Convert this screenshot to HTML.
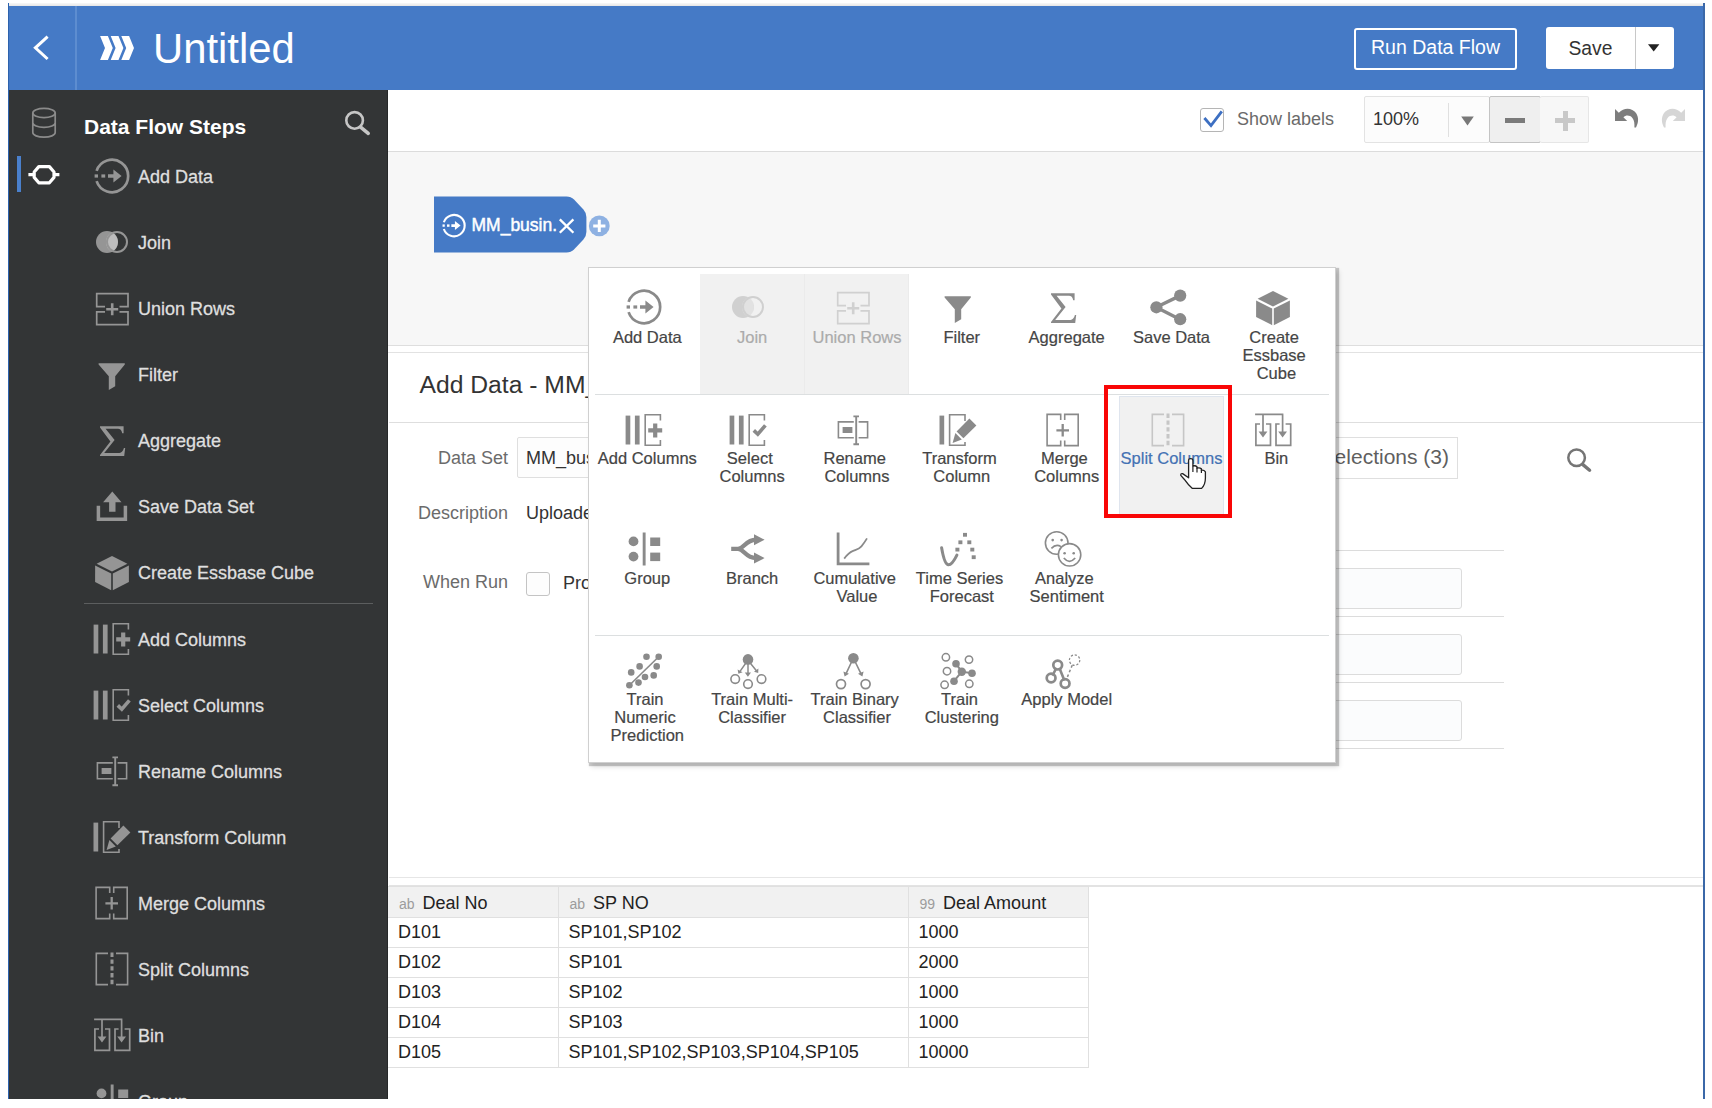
<!DOCTYPE html>
<html lang="en">
<head>
<meta charset="utf-8">
<title>Untitled - Data Flow</title>
<style>
*{box-sizing:border-box;margin:0;padding:0}
html,body{width:1712px;height:1108px;overflow:hidden;background:#fff}
body{font-family:"Liberation Sans",Arial,sans-serif;color:#333;position:relative}
.abs{position:absolute}
.t{position:absolute;white-space:nowrap;line-height:1}
#frame{position:absolute;left:8px;top:3px;width:1697px;height:1095.6px;background:#fff;overflow:hidden;border-left:1px solid #2d62ad;border-right:2px solid #3b68a8}
/* coordinates inside #frame are offset: use .in to re-base to page coordinates */
#in{position:absolute;left:-9px;top:-3px;width:1712px;height:1108px}
#hdr{left:8px;top:6px;width:1697px;height:84px;background:#457ac6}
#hdr .div{left:75px;top:5px;width:1px;height:85px;background:#6a97d6}
#side{left:8px;top:90px;width:380px;height:1009px;background:#333536;border-right:1px solid #262829}
.sitem{position:absolute;left:138px;font-size:18px;color:#dfdfdf;line-height:20px;white-space:nowrap;-webkit-text-stroke:.3px #dfdfdf}
.sico{position:absolute;left:92px;width:38px;height:38px;color:#9a9a9a}
#tool{left:388px;top:90px;width:1317px;height:62px;background:#fff;border-bottom:1px solid #dcdcdc}
#canvas{left:388px;top:152px;width:1317px;height:194px;background:#f7f7f7;border-bottom:1px solid #dedede}
#panel{left:388px;top:352px;width:1317px;height:526px;background:#fff;border-top:1px solid #e2e2e2}
.lbl{position:absolute;font-size:18px;color:#6b6b6b;white-space:nowrap;line-height:20px;text-align:right;width:120px;left:388px}
.val{position:absolute;font-size:18px;color:#333;white-space:nowrap;line-height:20px}
#pop{left:588px;top:267px;width:748px;height:496px;background:#fff;border:1px solid #d0d0d0;box-shadow:2px 2px 1px 1px rgba(0,0,0,.2),3px 4px 5px rgba(0,0,0,.13)}
.plab{position:absolute;width:140px;text-align:center;font-size:16.5px;line-height:18px;white-space:nowrap;-webkit-text-stroke:.2px}
table{border-collapse:collapse;position:absolute;left:388px;top:886px;font-size:18px;color:#222}
td,th{border:1px solid #e0e0e0;height:30px;padding:0 0 0 10px;text-align:left;font-weight:normal;white-space:nowrap;line-height:27px}
td:first-child,th:first-child{border-left:none}
th{background:#f1f1f1;height:31px;line-height:26px;padding-top:2px}
th small{font-size:14px;color:#9c9c9c;margin-right:8px;margin-left:1px;position:relative;top:0px}
</style>
</head>
<body>

<div id="frame"><div id="in">

<!-- HEADER -->
<div class="abs" style="left:8px;top:3px;width:1697px;height:3px;background:linear-gradient(#f8f8f8,#e6e6e6)"></div>
<div id="hdr" class="abs"></div>
<div class="abs" style="left:75px;top:6px;width:2px;height:84px;background:#5d8dd0"></div>
<div class="t" id="title" style="left:153px;top:27px;font-size:41.8px;color:#fff;line-height:44px">Untitled</div>
<div class="abs" id="runbtn" style="left:1354px;top:28px;width:163px;height:42px;border:2px solid #fff;border-radius:3px;color:#fff;font-size:19.5px;line-height:34px;text-align:center">Run Data Flow</div>
<div class="abs" id="savebtn" style="left:1546px;top:27px;width:128px;height:42px;background:#fff;border-radius:3px"></div>
<div class="t" style="left:1568.5px;top:37.5px;font-size:19.3px;color:#333;line-height:22px">Save</div>
<div class="abs" style="left:1635px;top:27px;width:1px;height:42px;background:#c8c8c8"></div>

<svg class="abs" style="left:30px;top:32px;width:24px;height:32px" viewBox="30 32 24 32"><path d="M47.6 36.6L35.4 47.8L47.6 59" fill="none" stroke="#fff" stroke-width="3"/></svg>
<svg class="abs" style="left:98px;top:34px;width:38px;height:28px" viewBox="98 34 38 28"><g fill="#fff"><path id="chv" d="M100.1 35.9H107.9L112.8 47.9L107.9 60H100.1L105 47.9Z"/><path d="M110.7 35.9H118.5L123.4 47.9L118.5 60H110.7L115.6 47.9Z"/><path d="M121.3 35.9H129.1L134 47.9L129.1 60H121.3L126.2 47.9Z"/></g></svg>
<svg class="abs" style="left:1646px;top:42px;width:16px;height:12px" viewBox="1646 42 16 12"><path d="M1648 44.2H1659.4L1653.7 51.4Z" fill="#222"/></svg>

<!-- SIDEBAR -->
<div id="side" class="abs"></div>
<div class="t" style="left:84px;top:116px;font-size:21px;font-weight:bold;color:#fff;line-height:22px">Data Flow Steps</div>
<div class="abs" style="left:17px;top:156px;width:4px;height:36px;background:#4a80cc"></div>
<div class="abs" style="left:84px;top:603px;width:289px;height:1px;background:#5c5e5f"></div>
<svg class="abs" style="left:28px;top:104px;width:34px;height:38px" viewBox="28 104 34 38"><g fill="none" stroke="#8b8b8b" stroke-width="1.7"><ellipse cx="44" cy="113" rx="11.2" ry="4.6"/><path d="M32.8 113V132.6C32.8 135.2 37.8 137.2 44 137.2S55.2 135.2 55.2 132.6V113M32.8 122.8C32.8 125.4 37.8 127.4 44 127.4S55.2 125.4 55.2 122.8"/></g></svg>
<svg class="abs" style="left:340px;top:106px;width:34px;height:34px" viewBox="340 106 34 34"><circle cx="354.6" cy="120.4" r="8.3" fill="none" stroke="#c6c6c6" stroke-width="2.6"/><path d="M360.6 127.2L368.2 133.4" stroke="#c6c6c6" stroke-width="3.6" stroke-linecap="round"/></svg>
<svg class="abs" style="left:26px;top:160px;width:38px;height:30px" viewBox="26 160 38 30"><path d="M38.8 166.6H49.4L54 172V177.4L49.4 182.8H38.8L34.2 177.4V172ZM28.4 174.7H34.2M54 174.7H59.4" fill="none" stroke="#fff" stroke-width="3.2" stroke-linejoin="round"/></svg>
<svg class="abs" viewBox="0 0 40 40" style="left:91.5px;top:155.6px;width:40px;height:40px;color:#959595;overflow:visible"><path d="M4.6 14.9A16.2 16.2 0 1 1 4.6 25.1" fill="none" stroke="currentColor" stroke-width="2.7"/><rect x="2.6" y="18.4" width="3.4" height="3.2" fill="currentColor"/><rect x="9.4" y="18.4" width="3.8" height="3.2" fill="currentColor"/><path d="M16 18.2H21.4V13.6L29.6 20L21.4 26.4V21.8H16Z" fill="currentColor"/></svg>
<div class="sitem" style="top:167.0px">Add Data</div>
<svg class="abs" viewBox="0 0 40 40" style="left:91.5px;top:221.6px;width:40px;height:40px;color:#959595;overflow:visible"><circle cx="15" cy="20" r="11" fill="currentColor"/><path d="M20 10.2A11 11 0 0 1 20 29.8A11 11 0 0 1 20 10.2Z" fill="#fff" fill-opacity=".38"/><circle cx="25" cy="20" r="10" fill="none" stroke="currentColor" stroke-width="2"/></svg>
<div class="sitem" style="top:233.0px">Join</div>
<svg class="abs" viewBox="0 0 40 40" style="left:91.5px;top:287.6px;width:40px;height:40px;color:#959595;overflow:visible"><path d="M13 18.6H4.7V5.6H36V18.6H27.5M13 23.8H4.7V36.6H36V23.8H27.5" fill="none" stroke="currentColor" stroke-width="1.7"/><path d="M20.2 15.2V27.2M14.2 21.2H26.2" fill="none" stroke="currentColor" stroke-width="2.6"/></svg>
<div class="sitem" style="top:299.0px">Union Rows</div>
<svg class="abs" viewBox="0 0 40 40" style="left:91.5px;top:353.6px;width:40px;height:40px;color:#959595;overflow:visible"><path d="M7.2 9.2H32.2Q33.4 9.2 32.8 10.6L23.2 22.2V32.2L16.8 36V22.2L6.6 10.6Q6 9.2 7.2 9.2Z" fill="currentColor"/></svg>
<div class="sitem" style="top:365.0px">Filter</div>
<svg class="abs" viewBox="0 0 40 40" style="left:91.5px;top:419.6px;width:40px;height:40px;color:#959595;overflow:visible"><path d="M8 6.3H31.6V13.2H30.2C29.6 10 28.4 8.7 25 8.7H13.6L22.6 20L12.2 33H26.2C29.6 33 30.9 31.5 31.9 28H33.2L32.2 35.9H8V34.9L18.4 21.6L8 7.4Z" fill="currentColor"/></svg>
<div class="sitem" style="top:431.0px">Aggregate</div>
<svg class="abs" viewBox="0 0 40 40" style="left:91.5px;top:485.6px;width:40px;height:40px;color:#959595;overflow:visible"><path d="M6.4 19.8V33.2H33.4V19.8" fill="none" stroke="currentColor" stroke-width="3.5"/><path d="M20.3 5.5L29.5 16.3H23.5V25.8H17.1V16.3H11.1Z" fill="currentColor"/></svg>
<div class="sitem" style="top:497.0px">Save Data Set</div>
<svg class="abs" viewBox="0 0 40 40" style="left:91.5px;top:551.6px;width:40px;height:40px;color:#959595;overflow:visible"><path d="M20 3.9L35.4 11.7L20 19.5L4.6 11.7Z" fill="currentColor"/><path d="M3.1 13.4L19.2 21.5V38.2L3.1 30Z" fill="currentColor"/><path d="M36.9 13.4L20.8 21.5V38.2L36.9 30Z" fill="currentColor"/></svg>
<div class="sitem" style="top:563.0px">Create Essbase Cube</div>
<svg class="abs" viewBox="0 0 40 40" style="left:91.5px;top:618.6px;width:40px;height:40px;color:#959595;overflow:visible"><rect x="1.6" y="5.6" width="4.7" height="28.9" fill="currentColor"/><rect x="10.9" y="5.6" width="4.7" height="28.9" fill="currentColor"/><path d="M36.4 10.4V4.8H21.2V35.3H36.4V30" fill="none" stroke="currentColor" stroke-width="1.6"/><path d="M31.2 13.4V27.4M24.2 20.4H38.2" fill="none" stroke="currentColor" stroke-width="4.2"/></svg>
<div class="sitem" style="top:629.5px">Add Columns</div>
<svg class="abs" viewBox="0 0 40 40" style="left:91.5px;top:684.6px;width:40px;height:40px;color:#959595;overflow:visible"><rect x="1.6" y="5.6" width="4.7" height="28.9" fill="currentColor"/><rect x="10.9" y="5.6" width="4.7" height="28.9" fill="currentColor"/><path d="M36.4 10.4V4.8H21.2V35.3H36.4V30" fill="none" stroke="currentColor" stroke-width="1.6"/><path d="M25.8 20.4L29.8 24.2L37.4 15.4" fill="none" stroke="currentColor" stroke-width="3.6"/></svg>
<div class="sitem" style="top:695.5px">Select Columns</div>
<svg class="abs" viewBox="0 0 40 40" style="left:91.5px;top:750.6px;width:40px;height:40px;color:#959595;overflow:visible"><path d="M20.8 11.9H5.4V27.7H20.8M25.6 11.9H34.6V27.7H25.6" fill="none" stroke="currentColor" stroke-width="1.6"/><path d="M23.2 5.8V34.8M20.4 6.4H26M20.4 34.2H26" fill="none" stroke="currentColor" stroke-width="1.9"/><rect x="9.6" y="17" width="9.8" height="6" fill="currentColor"/></svg>
<div class="sitem" style="top:761.5px">Rename Columns</div>
<svg class="abs" viewBox="0 0 40 40" style="left:91.5px;top:816.6px;width:40px;height:40px;color:#959595;overflow:visible"><rect x="1.5" y="5.6" width="4.7" height="28.9" fill="currentColor"/><path d="M27 11V4.8H11.6V35.3H27V32" fill="none" stroke="currentColor" stroke-width="1.6"/><path d="M31.4 8.6L38.4 15.6L25.4 28.2L18.6 21.4Z" fill="currentColor"/><path d="M17.4 23L23.8 29.6L14.6 33Z" fill="currentColor"/></svg>
<div class="sitem" style="top:827.5px">Transform Column</div>
<svg class="abs" viewBox="0 0 40 40" style="left:91.5px;top:882.6px;width:40px;height:40px;color:#959595;overflow:visible"><path d="M17.7 10V4.4H4.1V35.6H17.7V30.4M21.7 10V4.4H35.2V35.6H21.7V30.4" fill="none" stroke="currentColor" stroke-width="1.6"/><path d="M19.7 14V26.6M13.4 20.3H26" fill="none" stroke="currentColor" stroke-width="2.3"/></svg>
<div class="sitem" style="top:893.5px">Merge Columns</div>
<svg class="abs" viewBox="0 0 40 40" style="left:91.5px;top:948.6px;width:40px;height:40px;color:#959595;overflow:visible"><path d="M16 4.4H4.3V35.6H16M24 4.4H35.6V35.6H24" fill="none" stroke="currentColor" stroke-width="1.6"/><path d="M20 3.6V36.4" fill="none" stroke="currentColor" stroke-width="3" stroke-dasharray="4.4 2.4"/></svg>
<div class="sitem" style="top:959.5px">Split Columns</div>
<svg class="abs" viewBox="0 0 40 40" style="left:91.5px;top:1014.6px;width:40px;height:40px;color:#959595;overflow:visible"><path d="M2.1 4.4H30.4M10 4.4V22M29.6 4.4V22" fill="none" stroke="currentColor" stroke-width="1.7"/><path d="M5.6 21.4H14.4L10 27.4ZM25.2 21.4H34L29.6 27.4Z" fill="currentColor"/><path d="M7 14H2.9V35.4H17.5V14H13M26.6 14H23V35.4H37.7V14H32.6" fill="none" stroke="currentColor" stroke-width="1.7"/></svg>
<div class="sitem" style="top:1025.5px">Bin</div>
<svg class="abs" viewBox="0 0 40 40" style="left:91.5px;top:1080.6px;width:40px;height:40px;color:#959595;overflow:visible"><circle cx="9.5" cy="12.4" r="4.9" fill="currentColor"/><circle cx="9.5" cy="27.6" r="4.9" fill="currentColor"/><rect x="18.7" y="3.5" width="2.9" height="33" fill="currentColor"/><rect x="26.2" y="8.5" width="10" height="8.5" fill="currentColor"/><rect x="26.2" y="23.6" width="10" height="8.5" fill="currentColor"/></svg>
<div class="sitem" style="top:1091.5px">Group</div>


<!-- TOOLBAR -->
<div id="tool" class="abs"></div>
<div class="abs" style="left:1200px;top:108px;width:24px;height:24px;border:1px solid #b5b5b5;border-radius:3px;background:#fff"></div>
<div class="t" style="left:1237px;top:109px;font-size:18px;color:#6a6a6a;line-height:20px">Show labels</div>
<div class="abs" style="left:1364px;top:96px;width:126px;height:47px;border:1px solid #e3e3e3;border-radius:2px;background:#fcfcfc"></div>
<div class="t" style="left:1373px;top:109px;font-size:18px;color:#333;line-height:20px">100%</div>
<div class="abs" style="left:1448px;top:103px;width:1px;height:34px;background:#e0e0e0"></div>
<div class="abs" style="left:1489px;top:96px;width:52px;height:47px;border:1px solid #c4c4c4;border-radius:2px;background:#efefef"></div>
<div class="abs" style="left:1540px;top:96px;width:49px;height:47px;border:1px solid #e6e6e6;border-left:none;border-radius:2px;background:#f7f7f7"></div>

<svg class="abs" style="left:1200px;top:106px;width:28px;height:28px" viewBox="1200 106 28 28"><path d="M1204.4 118L1211 125.6L1221.8 111.4" fill="none" stroke="#3d6fc2" stroke-width="2.8"/></svg>
<svg class="abs" style="left:1458px;top:112px;width:20px;height:16px" viewBox="1458 112 20 16"><path d="M1461.2 116.6H1473.8L1467.5 125.4Z" fill="#787878"/></svg>
<div class="abs" style="left:1505px;top:118px;width:20px;height:5px;background:#7a7a7a"></div>
<div class="abs" style="left:1555px;top:118px;width:20px;height:5px;background:#c8c8c8"></div>
<div class="abs" style="left:1562.5px;top:110.5px;width:5px;height:20px;background:#c8c8c8"></div>
<svg class="abs" style="left:1612px;top:104px;width:30px;height:28px" viewBox="-3 -4 30 28"><path d="M0 1L0 13L12.2 13L8.4 9.2C11 6.8 15 7 17.4 10C19.4 12.4 19.6 15.6 19.4 19.4L21 19.4C23.6 14.6 24 9.6 21 5C17.4 0 9.4 -1.4 3.8 4.8Z" fill="#7d7d7d"/></svg>
<svg class="abs" style="left:1658px;top:104px;width:30px;height:28px" viewBox="-3 -4 30 28"><path transform="translate(24 0) scale(-1 1)" d="M0 1L0 13L12.2 13L8.4 9.2C11 6.8 15 7 17.4 10C19.4 12.4 19.6 15.6 19.4 19.4L21 19.4C23.6 14.6 24 9.6 21 5C17.4 0 9.4 -1.4 3.8 4.8Z" fill="#d6d6d6"/></svg>

<!-- CANVAS -->
<div id="canvas" class="abs"></div>

<svg class="abs" style="left:430px;top:192px;width:190px;height:66px" viewBox="430 192 190 66">
<path d="M434 196.4H566.5Q571 196.4 574 199.4L583.4 209.4Q586.4 212.6 586.4 217V231.8Q586.4 236.2 583.4 239.4L574 249.4Q571 252.4 566.5 252.4H434Z" fill="#457ac6"/>
<g transform="translate(440.8 212.4) scale(0.66)" fill="#fff" stroke="none"><path d="M4.6 14.9A16.2 16.2 0 1 1 4.6 25.1" fill="none" stroke="#fff" stroke-width="3.2"/><rect x="2.6" y="18.2" width="3.4" height="3.6"/><rect x="9.4" y="18.2" width="3.8" height="3.6"/><path d="M16 18H21.4V13.2L30 20L21.4 26.8V22H16Z"/></g>
<path d="M559.8 219.4L573.4 232.8M573.4 219.4L559.8 232.8" stroke="#fff" stroke-width="2.3" fill="none"/>
<circle cx="599.3" cy="225.9" r="10.4" fill="#8eb1e2"/><path d="M599.3 219.8V232M593.2 225.9H605.4" stroke="#fff" stroke-width="3" fill="none"/>
</svg>
<div class="t" style="left:471.5px;top:215px;font-size:17.5px;color:#fff;line-height:20px;-webkit-text-stroke:.45px #fff">MM_busin.</div>

<!-- PANEL -->
<div id="panel" class="abs"></div>
<div class="t" style="left:419.5px;top:370.5px;font-size:24.7px;color:#333;line-height:28px">Add Data - MM_business</div>
<div class="abs" style="left:389px;top:422px;width:1316px;height:1px;background:#dedede"></div>
<div class="lbl" style="top:448px">Data Set</div>
<div class="abs" style="left:517px;top:437px;width:360px;height:41px;border:1px solid #dfdfdf;border-radius:2px;background:#fdfdfd"></div>
<div class="val" style="left:526px;top:448px">MM_business_deals</div>
<div class="abs" style="left:1200px;top:437px;width:258px;height:42px;border:1px solid #dfdfdf;background:#fff"></div>
<div class="t" style="right:263px;top:445px;font-size:21px;color:#5f5f5f;line-height:23px">Selections (3)</div>
<div class="lbl" style="top:503px">Description</div>
<div class="val" style="left:526px;top:503px">Uploaded from MM_business.xlsx</div>
<div class="lbl" style="top:572px">When Run</div>
<div class="abs" style="left:526px;top:572px;width:24px;height:24px;border:1px solid #c4c4c4;border-radius:3px;background:#fdfdfd"></div>
<div class="val" style="left:563px;top:573px">Prompt to select Data Set</div>

<div class="abs" style="left:1200px;top:550px;width:304px;height:1px;background:#dcdcdc"></div>
<div class="abs" style="left:1200px;top:616px;width:304px;height:1px;background:#dcdcdc"></div>
<div class="abs" style="left:1200px;top:682px;width:304px;height:1px;background:#dcdcdc"></div>
<div class="abs" style="left:1200px;top:748px;width:304px;height:1px;background:#dcdcdc"></div>
<div class="abs" style="left:1200px;top:568px;width:262px;height:41px;border:1px solid #dcdcdc;border-radius:3px;background:#fbfcfd"></div>
<div class="abs" style="left:1200px;top:634px;width:262px;height:41px;border:1px solid #dcdcdc;border-radius:3px;background:#fbfcfd"></div>
<div class="abs" style="left:1200px;top:700px;width:262px;height:41px;border:1px solid #dcdcdc;border-radius:3px;background:#fbfcfd"></div>

<svg class="abs" style="left:1562px;top:444px;width:34px;height:32px" viewBox="1562 444 34 32"><circle cx="1576.6" cy="457.8" r="8.3" fill="none" stroke="#757575" stroke-width="2.5"/><path d="M1582.6 464.4L1589.6 470.2" stroke="#757575" stroke-width="3.4" stroke-linecap="round"/></svg>

<!-- TABLE -->
<div class="abs" style="left:389px;top:877px;width:1316px;height:1px;background:#e6e6e6"></div>
<div class="abs" style="left:389px;top:885px;width:1316px;height:2px;background:#e3e3e3"></div>
<table>
<tr><th style="width:170px"><small>ab</small>Deal No</th><th style="width:350px"><small>ab</small>SP NO</th><th style="width:180px"><small>99</small>Deal Amount</th></tr>
<tr><td>D101</td><td>SP101,SP102</td><td>1000</td></tr>
<tr><td>D102</td><td>SP101</td><td>2000</td></tr>
<tr><td>D103</td><td>SP102</td><td>1000</td></tr>
<tr><td>D104</td><td>SP103</td><td>1000</td></tr>
<tr><td>D105</td><td>SP101,SP102,SP103,SP104,SP105</td><td>10000</td></tr>
</table>

<!-- POPUP -->
<div id="pop" class="abs"></div>
<div class="abs" style="left:595px;top:394px;width:734px;height:1px;background:#dcdfe0"></div>
<div class="abs" style="left:595px;top:635px;width:734px;height:1px;background:#dcdfe0"></div>
<svg class="abs" viewBox="0 0 40 40" style="left:623.6px;top:287.3px;width:40px;height:40px;color:#8a8a8a;overflow:visible"><path d="M4.6 14.9A16.2 16.2 0 1 1 4.6 25.1" fill="none" stroke="currentColor" stroke-width="2.7"/><rect x="2.6" y="18.4" width="3.4" height="3.2" fill="currentColor"/><rect x="9.4" y="18.4" width="3.8" height="3.2" fill="currentColor"/><path d="M16 18.2H21.4V13.6L29.6 20L21.4 26.4V21.8H16Z" fill="currentColor"/></svg>
<div class="plab" style="left:577.3px;top:328px;color:#454545">Add Data</div>
<div class="abs" style="left:699.9px;top:274px;width:104.8px;height:120px;background:#f1f1f1;border-right:1px solid #ebebeb"></div>
<svg class="abs" viewBox="0 0 40 40" style="left:728.4px;top:287.3px;width:40px;height:40px;color:#d0d0d0;overflow:visible"><circle cx="15" cy="20" r="11" fill="currentColor"/><path d="M20 10.2A11 11 0 0 1 20 29.8A11 11 0 0 1 20 10.2Z" fill="#fff" fill-opacity=".38"/><circle cx="25" cy="20" r="10" fill="none" stroke="currentColor" stroke-width="2"/></svg>
<div class="plab" style="left:682.1px;top:328px;color:#ababab">Join</div>
<div class="abs" style="left:804.7px;top:274px;width:104.8px;height:120px;background:#f1f1f1;border-right:1px solid #ebebeb"></div>
<svg class="abs" viewBox="0 0 40 40" style="left:833.3px;top:287.3px;width:40px;height:40px;color:#d0d0d0;overflow:visible"><path d="M13 18.6H4.7V5.6H36V18.6H27.5M13 23.8H4.7V36.6H36V23.8H27.5" fill="none" stroke="currentColor" stroke-width="1.7"/><path d="M20.2 15.2V27.2M14.2 21.2H26.2" fill="none" stroke="currentColor" stroke-width="2.6"/></svg>
<div class="plab" style="left:787.0px;top:328px;color:#ababab">Union Rows</div>
<svg class="abs" viewBox="0 0 40 40" style="left:938.1px;top:287.3px;width:40px;height:40px;color:#8a8a8a;overflow:visible"><path d="M7.2 9.2H32.2Q33.4 9.2 32.8 10.6L23.2 22.2V32.2L16.8 36V22.2L6.6 10.6Q6 9.2 7.2 9.2Z" fill="currentColor"/></svg>
<div class="plab" style="left:891.8px;top:328px;color:#454545">Filter</div>
<svg class="abs" viewBox="0 0 40 40" style="left:1043.0px;top:287.3px;width:40px;height:40px;color:#8a8a8a;overflow:visible"><path d="M8 6.3H31.6V13.2H30.2C29.6 10 28.4 8.7 25 8.7H13.6L22.6 20L12.2 33H26.2C29.6 33 30.9 31.5 31.9 28H33.2L32.2 35.9H8V34.9L18.4 21.6L8 7.4Z" fill="currentColor"/></svg>
<div class="plab" style="left:996.7px;top:328px;color:#454545">Aggregate</div>
<svg class="abs" viewBox="0 0 40 40" style="left:1147.8px;top:287.3px;width:40px;height:40px;color:#8a8a8a;overflow:visible"><path d="M32.2 8.6L8.2 20.3L32.2 32.4" fill="none" stroke="currentColor" stroke-width="3.4" stroke-linejoin="round"/><circle cx="32.2" cy="8.6" r="6.1" fill="currentColor"/><circle cx="8.4" cy="20.3" r="6.1" fill="currentColor"/><circle cx="32.2" cy="32.2" r="6.1" fill="currentColor"/></svg>
<div class="plab" style="left:1101.5px;top:328px;color:#454545">Save Data</div>
<svg class="abs" viewBox="0 0 40 40" style="left:1252.7px;top:287.3px;width:40px;height:40px;color:#8a8a8a;overflow:visible"><path d="M20 3.9L35.4 11.7L20 19.5L4.6 11.7Z" fill="currentColor"/><path d="M3.1 13.4L19.2 21.5V38.2L3.1 30Z" fill="currentColor"/><path d="M36.9 13.4L20.8 21.5V38.2L36.9 30Z" fill="currentColor"/></svg>
<div class="plab" style="left:1206.4px;top:328px;color:#454545">Create&nbsp;<br>Essbase&nbsp;<br>Cube</div>
<svg class="abs" viewBox="0 0 40 40" style="left:623.6px;top:409.5px;width:40px;height:40px;color:#8a8a8a;overflow:visible"><rect x="1.6" y="5.6" width="4.7" height="28.9" fill="currentColor"/><rect x="10.9" y="5.6" width="4.7" height="28.9" fill="currentColor"/><path d="M36.4 10.4V4.8H21.2V35.3H36.4V30" fill="none" stroke="currentColor" stroke-width="1.6"/><path d="M31.2 13.4V27.4M24.2 20.4H38.2" fill="none" stroke="currentColor" stroke-width="4.2"/></svg>
<div class="plab" style="left:577.3px;top:449px;color:#454545">Add Columns</div>
<svg class="abs" viewBox="0 0 40 40" style="left:728.4px;top:409.5px;width:40px;height:40px;color:#8a8a8a;overflow:visible"><rect x="1.6" y="5.6" width="4.7" height="28.9" fill="currentColor"/><rect x="10.9" y="5.6" width="4.7" height="28.9" fill="currentColor"/><path d="M36.4 10.4V4.8H21.2V35.3H36.4V30" fill="none" stroke="currentColor" stroke-width="1.6"/><path d="M25.8 20.4L29.8 24.2L37.4 15.4" fill="none" stroke="currentColor" stroke-width="3.6"/></svg>
<div class="plab" style="left:682.1px;top:449px;color:#454545">Select&nbsp;<br>Columns</div>
<svg class="abs" viewBox="0 0 40 40" style="left:833.3px;top:409.5px;width:40px;height:40px;color:#8a8a8a;overflow:visible"><path d="M20.8 11.9H5.4V27.7H20.8M25.6 11.9H34.6V27.7H25.6" fill="none" stroke="currentColor" stroke-width="1.6"/><path d="M23.2 5.8V34.8M20.4 6.4H26M20.4 34.2H26" fill="none" stroke="currentColor" stroke-width="1.9"/><rect x="9.6" y="17" width="9.8" height="6" fill="currentColor"/></svg>
<div class="plab" style="left:787.0px;top:449px;color:#454545">Rename&nbsp;<br>Columns</div>
<svg class="abs" viewBox="0 0 40 40" style="left:938.1px;top:409.5px;width:40px;height:40px;color:#8a8a8a;overflow:visible"><rect x="1.5" y="5.6" width="4.7" height="28.9" fill="currentColor"/><path d="M27 11V4.8H11.6V35.3H27V32" fill="none" stroke="currentColor" stroke-width="1.6"/><path d="M31.4 8.6L38.4 15.6L25.4 28.2L18.6 21.4Z" fill="currentColor"/><path d="M17.4 23L23.8 29.6L14.6 33Z" fill="currentColor"/></svg>
<div class="plab" style="left:891.8px;top:449px;color:#454545">Transform&nbsp;<br>Column</div>
<svg class="abs" viewBox="0 0 40 40" style="left:1043.0px;top:409.5px;width:40px;height:40px;color:#8a8a8a;overflow:visible"><path d="M17.7 10V4.4H4.1V35.6H17.7V30.4M21.7 10V4.4H35.2V35.6H21.7V30.4" fill="none" stroke="currentColor" stroke-width="1.6"/><path d="M19.7 14V26.6M13.4 20.3H26" fill="none" stroke="currentColor" stroke-width="2.3"/></svg>
<div class="plab" style="left:996.7px;top:449px;color:#454545">Merge&nbsp;<br>Columns</div>
<div class="abs" style="left:1119.2px;top:396px;width:104.8px;height:120px;background:#f1f1f1;border:1px solid #dfe5ee"></div>
<svg class="abs" viewBox="0 0 40 40" style="left:1147.8px;top:409.5px;width:40px;height:40px;color:#c6c6c6;overflow:visible"><path d="M16 4.4H4.3V35.6H16M24 4.4H35.6V35.6H24" fill="none" stroke="currentColor" stroke-width="1.6"/><path d="M20 3.6V36.4" fill="none" stroke="currentColor" stroke-width="3" stroke-dasharray="4.4 2.4"/></svg>
<div class="plab" style="left:1101.5px;top:449px;color:#4472b4">Split Columns</div>
<svg class="abs" viewBox="0 0 40 40" style="left:1252.7px;top:409.5px;width:40px;height:40px;color:#8a8a8a;overflow:visible"><path d="M2.1 4.4H30.4M10 4.4V22M29.6 4.4V22" fill="none" stroke="currentColor" stroke-width="1.7"/><path d="M5.6 21.4H14.4L10 27.4ZM25.2 21.4H34L29.6 27.4Z" fill="currentColor"/><path d="M7 14H2.9V35.4H17.5V14H13M26.6 14H23V35.4H37.7V14H32.6" fill="none" stroke="currentColor" stroke-width="1.7"/></svg>
<div class="plab" style="left:1206.4px;top:449px;color:#454545">Bin</div>
<svg class="abs" viewBox="0 0 40 40" style="left:623.6px;top:529.4px;width:40px;height:40px;color:#8a8a8a;overflow:visible"><circle cx="9.5" cy="12.4" r="4.9" fill="currentColor"/><circle cx="9.5" cy="27.6" r="4.9" fill="currentColor"/><rect x="18.7" y="3.5" width="2.9" height="33" fill="currentColor"/><rect x="26.2" y="8.5" width="10" height="8.5" fill="currentColor"/><rect x="26.2" y="23.6" width="10" height="8.5" fill="currentColor"/></svg>
<div class="plab" style="left:577.3px;top:569px;color:#454545">Group</div>
<svg class="abs" viewBox="0 0 40 40" style="left:728.4px;top:529.4px;width:40px;height:40px;color:#8a8a8a;overflow:visible"><path d="M3.2 19.9H10C16 19.9 17.5 10.7 28 10.7M10 19.9C16 19.9 17.5 29.1 28 29.1" fill="none" stroke="currentColor" stroke-width="4.4"/><path d="M26 5.2L36.6 10.7L26 16.2ZM26 23.6L36.6 29.1L26 34.6Z" fill="currentColor"/></svg>
<div class="plab" style="left:682.1px;top:569px;color:#454545">Branch</div>
<svg class="abs" viewBox="0 0 40 40" style="left:833.3px;top:529.4px;width:40px;height:40px;color:#8a8a8a;overflow:visible"><path d="M5.1 3.4V34.8H36.4" fill="none" stroke="currentColor" stroke-width="2.8"/><path d="M11.2 29.6C14 26 16 23.6 19.6 22.2C24 20.4 26 20.2 28.4 17.4C30.6 14.8 32.4 12 34 9.4" fill="none" stroke="currentColor" stroke-width="1.8"/></svg>
<div class="plab" style="left:787.0px;top:569px;color:#454545">Cumulative&nbsp;<br>Value</div>
<svg class="abs" viewBox="0 0 40 40" style="left:938.1px;top:529.4px;width:40px;height:40px;color:#8a8a8a;overflow:visible"><path d="M3.6 18.7C5 27 7 35.6 10.4 35.8C13.8 36 17 30 18.9 26.1" fill="none" stroke="currentColor" stroke-width="3" stroke-linecap="round"/><g fill="currentColor"><rect x="25" y="3.9" width="4" height="3.8"/><rect x="20.4" y="11.4" width="4" height="3.8"/><rect x="29.3" y="11.4" width="4" height="3.8"/><rect x="17.4" y="18.7" width="4" height="3.8"/><rect x="32.3" y="18.7" width="4" height="3.8"/><rect x="33.7" y="26.3" width="4" height="3.8"/></g></svg>
<div class="plab" style="left:891.8px;top:569px;color:#454545">Time Series&nbsp;<br>Forecast</div>
<svg class="abs" viewBox="0 0 40 40" style="left:1043.0px;top:529.4px;width:40px;height:40px;color:#8a8a8a;overflow:visible"><circle cx="13.7" cy="14" r="11.3" fill="none" stroke="currentColor" stroke-width="1.6"/><circle cx="9.7" cy="11.1" r="1.3" fill="currentColor"/><circle cx="18.6" cy="11.1" r="1.3" fill="currentColor"/><path d="M8.4 19.4Q13 14.4 18 17.6" fill="none" stroke="currentColor" stroke-width="1.6"/><circle cx="26.6" cy="25.8" r="11.2" fill="#fff" stroke="currentColor" stroke-width="1.6"/><circle cx="21.6" cy="24.2" r="1.3" fill="currentColor"/><circle cx="30.7" cy="24.2" r="1.3" fill="currentColor"/><path d="M20.8 29Q26.4 35.6 32.2 29" fill="none" stroke="currentColor" stroke-width="1.7"/></svg>
<div class="plab" style="left:996.7px;top:569px;color:#454545">Analyze&nbsp;<br>Sentiment</div>
<svg class="abs" viewBox="0 0 40 40" style="left:623.6px;top:650.6px;width:40px;height:40px;color:#8a8a8a;overflow:visible"><path d="M5.4 34.2L34.7 5.8" fill="none" stroke="currentColor" stroke-width="1.6"/><g fill="currentColor"><circle cx="22.5" cy="5.8" r="3.3"/><circle cx="34.7" cy="5.8" r="3.3"/><circle cx="15.6" cy="15.4" r="3.3"/><circle cx="32.7" cy="15.4" r="3.3"/><circle cx="7.2" cy="21.4" r="3.3"/><circle cx="21" cy="26" r="3.3"/><circle cx="29.7" cy="24.4" r="3.3"/><circle cx="14.5" cy="31.6" r="3.3"/><circle cx="5.4" cy="34.2" r="3.3"/></g></svg>
<div class="plab" style="left:577.3px;top:690px;color:#454545">Train&nbsp;<br>Numeric&nbsp;<br>Prediction</div>
<svg class="abs" viewBox="0 0 40 40" style="left:728.4px;top:650.6px;width:40px;height:40px;color:#8a8a8a;overflow:visible"><circle cx="20" cy="8.4" r="5.3" fill="currentColor"/><path d="M18.6 11L12 20.4M20 11V23M21.4 11L28.4 19.8" fill="none" stroke="currentColor" stroke-width="1.5"/><path d="M9.6 18.4L10.4 22.8L14.6 21.2ZM16.8 21.6H23L19.9 25.8ZM26 20.8L30.2 22L30.4 17.6Z" fill="currentColor"/><g fill="none" stroke="currentColor" stroke-width="1.6"><circle cx="7.2" cy="28.1" r="4.3"/><circle cx="20" cy="33.1" r="4.3"/><circle cx="33.5" cy="28.1" r="4.3"/></g></svg>
<div class="plab" style="left:682.1px;top:690px;color:#454545">Train Multi-<br>Classifier</div>
<svg class="abs" viewBox="0 0 40 40" style="left:833.3px;top:650.6px;width:40px;height:40px;color:#8a8a8a;overflow:visible"><circle cx="20.4" cy="7.3" r="5.3" fill="currentColor"/><path d="M19 10L13.2 22.4M21.8 10L27.8 22.4" fill="none" stroke="currentColor" stroke-width="1.6"/><path d="M10.4 20.6L11.6 25.6L16 22.8ZM25 22.8L29.4 25.6L30.6 20.6Z" fill="currentColor"/><g fill="none" stroke="currentColor" stroke-width="1.7"><circle cx="8" cy="33.1" r="4.5"/><circle cx="32.6" cy="33.1" r="4.5"/></g></svg>
<div class="plab" style="left:787.0px;top:690px;color:#454545">Train Binary&nbsp;<br>Classifier</div>
<svg class="abs" viewBox="0 0 40 40" style="left:938.1px;top:650.6px;width:40px;height:40px;color:#8a8a8a;overflow:visible"><g fill="none" stroke="currentColor" stroke-width="1.5"><circle cx="7.9" cy="6.3" r="3.7"/><circle cx="31" cy="8.6" r="3.7"/><circle cx="9" cy="20.2" r="3.7"/><circle cx="6.6" cy="33.8" r="3.7"/><circle cx="31.3" cy="32.8" r="3.7"/></g><path d="M18 12.8L23.8 20.7L34 22.3M23.8 20.7L16 30.2" fill="none" stroke="currentColor" stroke-width="2"/><g fill="currentColor"><circle cx="18" cy="12.8" r="3.8"/><circle cx="23.8" cy="20.7" r="4.2"/><circle cx="34" cy="22.3" r="3.8"/><circle cx="16" cy="30.2" r="3.8"/></g></svg>
<div class="plab" style="left:891.8px;top:690px;color:#454545">Train&nbsp;<br>Clustering</div>
<svg class="abs" viewBox="0 0 40 40" style="left:1043.0px;top:650.6px;width:40px;height:40px;color:#8a8a8a;overflow:visible"><path d="M13.4 17L9.4 24.6M16.4 17L21.4 29.4" fill="none" stroke="currentColor" stroke-width="2.6"/><g fill="none" stroke="currentColor" stroke-width="2.7"><circle cx="14.7" cy="14.1" r="4.4"/><circle cx="8.1" cy="27" r="4.4"/><circle cx="22.1" cy="32.5" r="4.4"/></g><circle cx="31.6" cy="9.1" r="5.2" fill="none" stroke="currentColor" stroke-width="1.2" stroke-dasharray="2.2 1.8"/><path d="M29.2 14.2L23.8 27.4" fill="none" stroke="currentColor" stroke-width="1.5" stroke-dasharray="2.6 2.4"/></svg>
<div class="plab" style="left:996.7px;top:690px;color:#454545">Apply Model</div>

<div class="abs" style="left:1104px;top:385px;width:128px;height:133px;border:4px solid #f90606"></div>

<svg class="abs" style="left:1177.6px;top:456.4px;width:32px;height:36px" viewBox="-2 -2 32 36"><path d="M8.6 2.4Q8.6 0.6 10.7 0.6Q12.9 0.6 12.9 2.4V8.2Q15 7 17 8.8V10.2Q19.4 9.2 21.4 10.8V12.2Q24 11.8 25.4 13.8V20Q25.4 26.6 21.6 30.4H12.4Q8 26.8 4.2 21.2L0.8 17.4Q0.4 15.2 2.6 15.6L8.6 19.8Z" fill="#fff" stroke="#222" stroke-width="1.3" stroke-linejoin="round"/><path d="M12.9 8.2V14M17 9.6V14.4M21.4 11.6V15" fill="none" stroke="#222" stroke-width="1.2"/></svg>
</div></div>
</body>
</html>
